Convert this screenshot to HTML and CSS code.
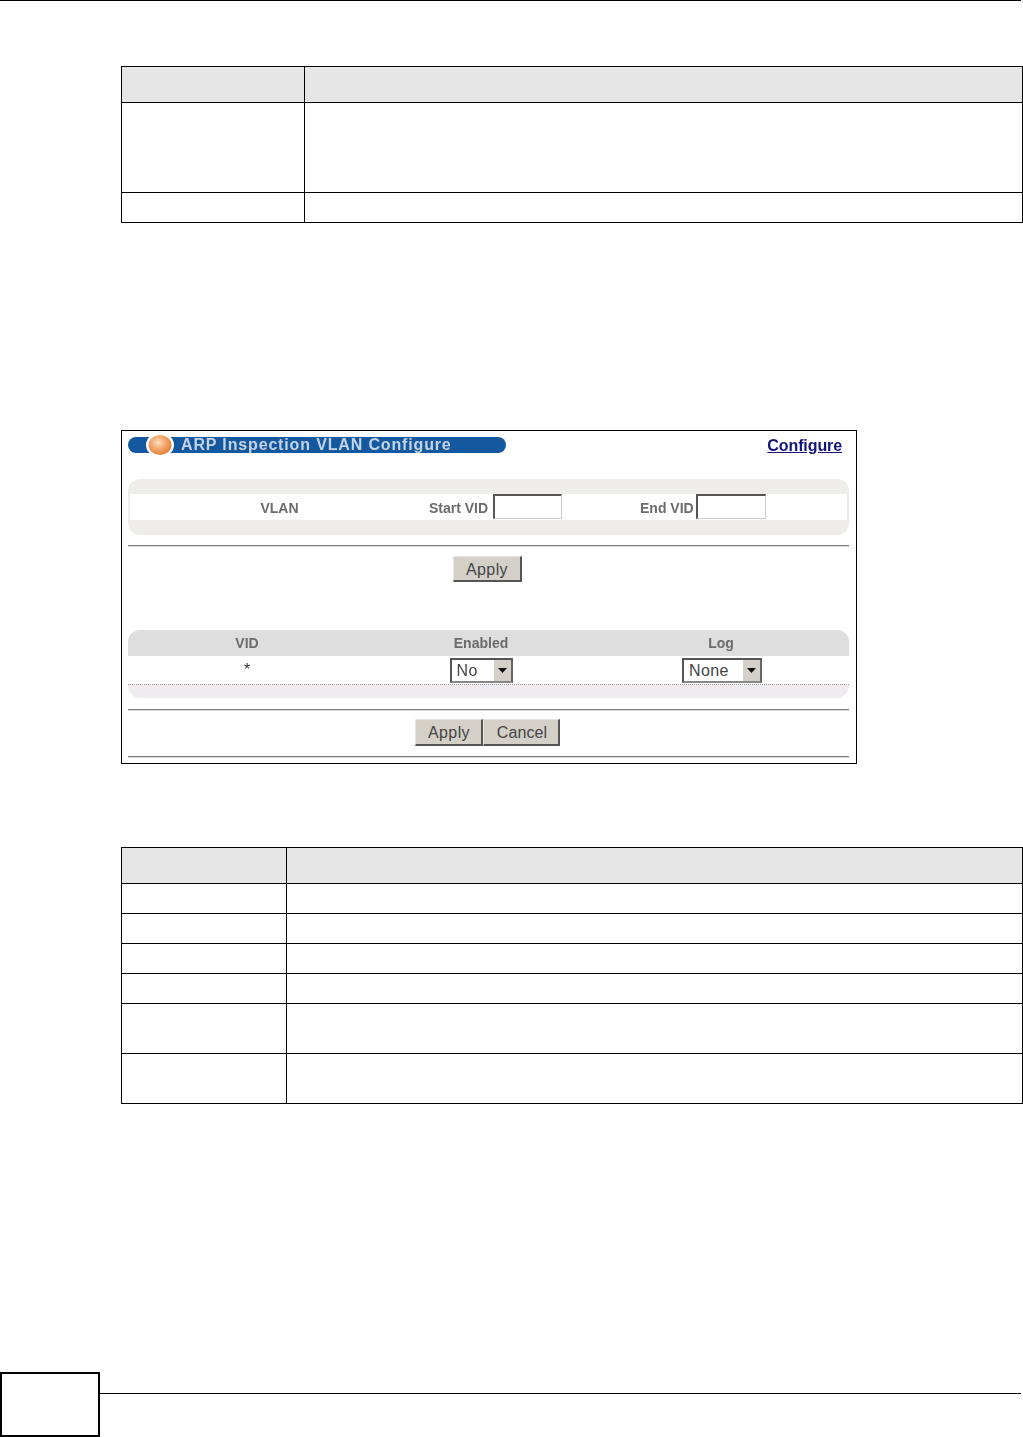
FILE: index.html
```html
<!DOCTYPE html>
<html lang="en">
<head>
<meta charset="utf-8">
<title>ARP Inspection VLAN Configure</title>
<link rel="stylesheet" href="styles.css">
</head>
<body>
<div class="page">
  <div class="top-rule"></div>

  <table class="doc-table doc-table-a">
    <colgroup><col class="col-a"><col></colgroup>
    <tr class="row-head"><th></th><th></th></tr>
    <tr class="row-tall"><td></td><td></td></tr>
    <tr class="row-one"><td></td><td></td></tr>
  </table>

  <section class="screen">
    <div class="screen-inner">
      <div class="screen-head">
        <div class="pill">
          <svg class="ball" width="28" height="24" viewBox="0 0 28 24" aria-hidden="true">
            <defs>
              <radialGradient id="ballFill" cx="0.42" cy="0.38" r="0.65">
                <stop offset="0" stop-color="#fbe0c4"/>
                <stop offset="0.45" stop-color="#f4ad74"/>
                <stop offset="1" stop-color="#e07c34"/>
              </radialGradient>
            </defs>
            <ellipse cx="14" cy="12" rx="14" ry="12" fill="#fff"/>
            <ellipse cx="14" cy="12" rx="11.5" ry="10" fill="url(#ballFill)"/>
          </svg>
          <span class="pill-title">ARP Inspection VLAN Configure</span>
        </div>
        <a class="config-link" href="#">Configure</a>
      </div>

      <div class="panel panel-light">
        <div class="vlan-row">
          <span class="label vlan-label">VLAN</span>
          <label class="field"><span class="label">Start VID</span><input class="text-input" type="text"></label>
          <label class="field field-end"><span class="label">End VID</span><input class="text-input text-input-end" type="text"></label>
        </div>
      </div>

      <div class="rule rule-a"></div>
      <div class="actions actions-a"><button class="btn btn-apply-a" type="button">Apply</button></div>

      <div class="panel-table">
        <div class="grid-row grid-head">
          <span class="label">VID</span>
          <span class="label">Enabled</span>
          <span class="label">Log</span>
        </div>
        <div class="grid-row grid-body">
          <span class="star">*</span>
          <div class="select select-no"><span class="select-text">No</span><span class="select-btn"><svg width="9" height="5" viewBox="0 0 9 5" aria-hidden="true"><path d="M0 0h9L4.5 5z" fill="#111"/></svg></span></div>
          <div class="select select-none"><span class="select-text">None</span><span class="select-btn"><svg width="9" height="5" viewBox="0 0 9 5" aria-hidden="true"><path d="M0 0h9L4.5 5z" fill="#111"/></svg></span></div>
        </div>
        <div class="grid-foot"></div>
      </div>

      <div class="rule rule-b"></div>
      <div class="actions actions-b">
        <button class="btn btn-apply-b" type="button">Apply</button>
        <button class="btn btn-cancel" type="button">Cancel</button>
      </div>
      <div class="rule rule-c"></div>
    </div>
  </section>

  <table class="doc-table doc-table-b">
    <colgroup><col class="col-b"><col></colgroup>
    <tr class="row-head"><th></th><th></th></tr>
    <tr class="row-one"><td></td><td></td></tr>
    <tr class="row-one"><td></td><td></td></tr>
    <tr class="row-one"><td></td><td></td></tr>
    <tr class="row-one"><td></td><td></td></tr>
    <tr class="row-two"><td></td><td></td></tr>
    <tr class="row-two"><td></td><td></td></tr>
  </table>

  <footer class="page-foot">
    <div class="page-box"></div>
    <div class="foot-rule"></div>
  </footer>
</div>
</body>
</html>
```
FILE: styles.css
```css
html, body {
  margin: 0;
  padding: 0;
  background: #fff;
}

.page {
  width: 1023px;
  height: 1437px;
  overflow: hidden;
  display: flex;
  flex-direction: column;
  font-family: "Liberation Sans", Arial, sans-serif;
}

.top-rule {
  width: 1021px;
  height: 1px;
  background: #000;
  flex: none;
}

.doc-table {
  width: 902px;
  flex: none;
  margin-left: 121px;
  border-collapse: collapse;
  table-layout: fixed;
  border: 1px solid #000;
}

.doc-table th,
.doc-table td {
  box-sizing: border-box;
  padding: 0;
  border: 1px solid #000;
}

.doc-table th {
  background: #e6e6e6;
}

.doc-table-a { margin-top: 65px; }
.doc-table-b { margin-top: 83px; }

.col-a { width: 183px; }
.col-b { width: 165px; }

.row-head th { height: 36px; }
.row-tall td { height: 90px; }
.row-one td { height: 30px; }
.row-two td { height: 50px; }

.screen {
  box-sizing: border-box;
  flex: none;
  width: 736px;
  margin: 207px 0 0 121px;
  padding: 6px 7px 6px 6px;
  border: 1px solid #000;
  background: #fff;
}

.screen-inner {
  filter: blur(0.35px);
}

.screen-head {
  display: flex;
  justify-content: space-between;
  align-items: center;
  height: 16px;
  padding-right: 7px;
}

.pill {
  width: 378px;
  height: 16px;
  box-sizing: border-box;
  display: flex;
  align-items: center;
  gap: 7px;
  padding-left: 18px;
  border-radius: 8px;
  background: #14599f;
}

.ball { flex: none; }

.pill-title {
  font-size: 16px;
  font-weight: 700;
  letter-spacing: 0.85px;
  color: #c4d3e6;
  white-space: nowrap;
}

.config-link {
  padding-top: 2px;
  font-size: 16px;
  font-weight: 700;
  letter-spacing: -0.1px;
  color: #14147a;
  text-decoration: underline;
}

.label {
  font-size: 14px;
  font-weight: 700;
  color: #6b6b6b;
  white-space: nowrap;
}

.panel-light {
  margin-top: 26px;
  padding: 15px 2px;
  border-radius: 12px;
  background: #efecec;
}

.vlan-row {
  height: 26px;
  display: grid;
  grid-template-columns: 299px 211px 1fr;
  align-items: center;
  background: #fff;
}

.vlan-label { text-align: center; }

.field {
  display: flex;
  align-items: center;
  gap: 5px;
}

.field-end { gap: 2px; }

.text-input {
  box-sizing: border-box;
  width: 69px;
  height: 25px;
  margin: 0 0 2px;
  padding: 0;
  border-style: solid;
  border-width: 2px 1px 1px 2px;
  border-color: #555 #ccc #ccc #555;
  background: #fff;
  border-radius: 0;
  outline: none;
}

.text-input-end { width: 70px; }

.rule {
  height: 1px;
  background: #808080;
  box-shadow: 0 1px 0 #d8d8d8;
}

.rule-a { margin-top: 10px; }
.rule-b { margin-top: 11px; }
.rule-c { margin-top: 10px; }

.actions {
  display: flex;
  justify-content: center;
  padding-right: 2px;
}

.actions-a { margin-top: 10px; }
.actions-b { margin-top: 9px; }

.btn {
  box-sizing: border-box;
  margin: 0;
  padding: 2px 0 0;
  border-style: solid;
  border-width: 1px 2px 2px 1px;
  border-color: #e8e6e0 #555 #555 #e8e6e0;
  background: #d4d0c8;
  color: #444;
  font-family: "Liberation Sans", Arial, sans-serif;
  font-size: 16px;
  letter-spacing: 0.4px;
}

.btn-apply-a { width: 69px; height: 26px; }
.btn-apply-b { width: 68px; height: 27px; padding-left: 1px; }
.btn-cancel { width: 77px; height: 27px; padding-left: 2px; letter-spacing: 0.1px; }

.panel-table {
  margin-top: 48px;
  border-radius: 12px;
  overflow: hidden;
  background: #efecf0;
}

.grid-row {
  display: grid;
  grid-template-columns: 238px 230px 250px;
  align-items: center;
  justify-items: center;
}

.grid-head {
  height: 26px;
  background: #dedede;
}

.grid-body {
  height: 28px;
  background: #fff;
  border-bottom: 1px dotted #a08ea0;
}

.grid-foot { height: 13px; }

.star {
  font-size: 16px;
  color: #333;
}

.select {
  box-sizing: border-box;
  height: 25px;
  display: flex;
  align-items: center;
  justify-content: space-between;
  border-style: solid;
  border-width: 2px;
  border-color: #555 #666 #888 #555;
  background: #fff;
}

.select-no { width: 63px; }
.select-none { width: 80px; margin-left: 2px; }

.select-text {
  padding: 2px 0 0 5px;
  font-size: 16px;
  letter-spacing: 0.4px;
  color: #444;
}

.select-btn {
  width: 17px;
  height: 100%;
  display: flex;
  align-items: center;
  justify-content: center;
  background: #d4d0c8;
}

.doc-table-b + .page-foot { margin-top: auto; }

.page-foot {
  flex: none;
  height: 65px;
  display: flex;
  align-items: flex-start;
}

.page-box {
  box-sizing: border-box;
  flex: none;
  width: 100px;
  height: 65px;
  border: 2px solid #000;
}

.foot-rule {
  flex: none;
  width: 921px;
  height: 1px;
  margin-top: 21px;
  background: #000;
}
```
